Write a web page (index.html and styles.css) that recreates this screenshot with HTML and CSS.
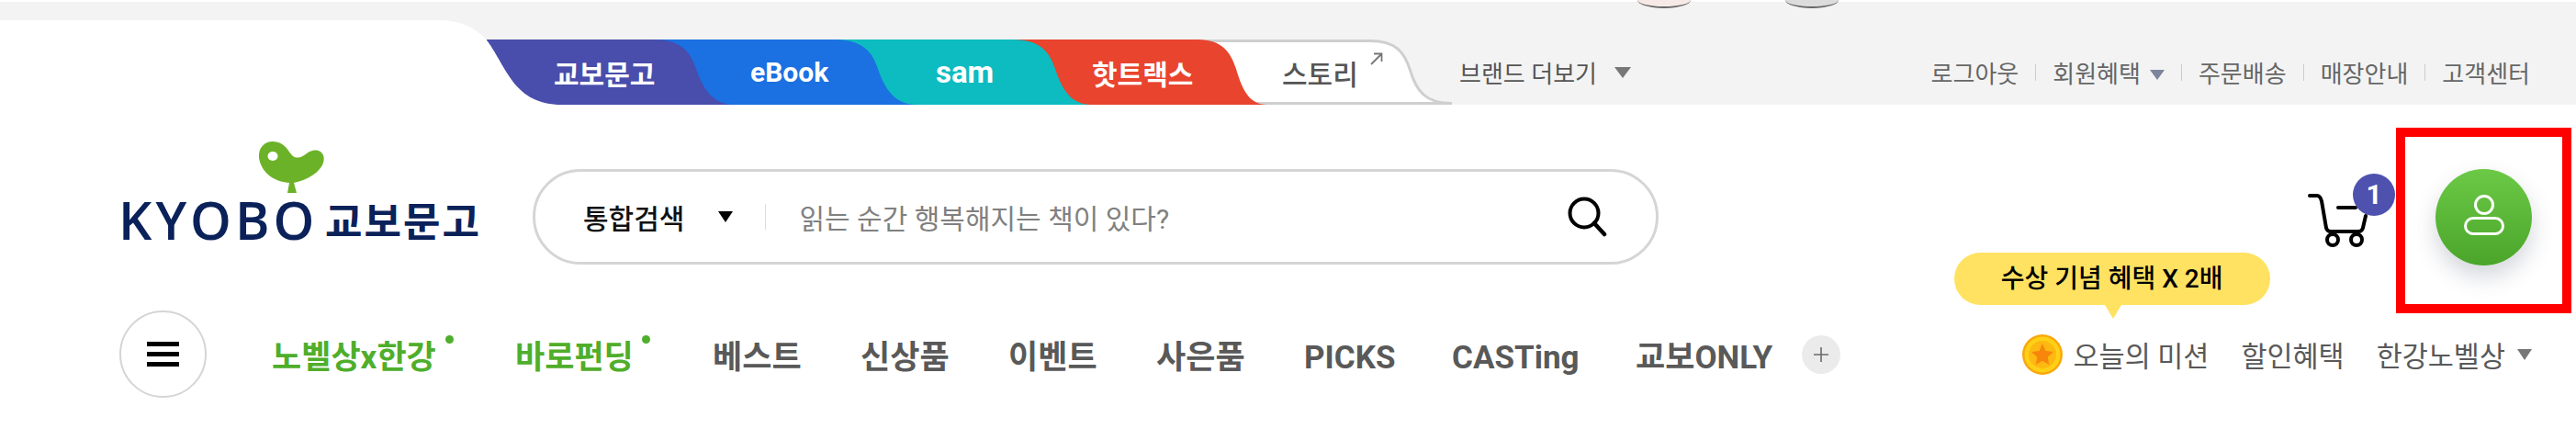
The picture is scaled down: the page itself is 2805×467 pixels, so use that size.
FILE: index.html
```html
<!DOCTYPE html>
<html lang="ko">
<head>
    <meta charset="UTF-8">
    <title>KYOBO 교보문고</title>
    <link rel="stylesheet" href="styles.css">
</head>
<body>
    <div class="topbar">
        <div class="home-notch">
            <svg class="tab-shape" width="610" height="112"><path d="M0 20H478C504 20 520 30 531 43C552 72 560 112 612 112H0Z" fill="#fff"/></svg>
        </div>
        <div class="brand-tabs">
            <a class="tab tab-kyobo">
                <svg class="tab-shape" width="270" height="71"><path d="M0 0H182C212 0 222 14 228 32C236 56 248 71 270 71H0Z" fill="#494dab"/></svg>
                <span>교보문고</span>
            </a>
            <a class="tab tab-ebook">
                <svg class="tab-shape" width="284" height="71"><path d="M0 0H194C226 0 236 14 242 32C250 56 262 71 284 71H0Z" fill="#1b70e2"/></svg>
                <span>eBook</span>
            </a>
            <a class="tab tab-sam">
                <svg class="tab-shape" width="281" height="71"><path d="M0 0H195C225 0 235 14 241 32C249 56 259 71 281 71H0Z" fill="#0cbcc0"/></svg>
                <span>sam</span>
            </a>
            <a class="tab tab-hot">
                <svg class="tab-shape" width="277" height="71"><path d="M0 0H201C228 0 237 14 243 32C250 56 258 71 277 71H0Z" fill="#e9442e"/></svg>
                <span>핫트랙스</span>
            </a>
            <a class="tab tab-story">
                <svg class="tab-shape" width="277" height="71"><path d="M0 1.5H188C216 1.5 225 14 231 32C238 56 248 69.500 277 69.500H0Z" fill="#fff" stroke="#cfcfcf" stroke-width="3"/></svg>
                <span>스토리</span>
                <svg class="story-arrow" width="14" height="14" viewBox="0 0 14 14"><path d="M1 13L12.500 1.500M4 1.500H12.500V10" fill="none" stroke="#777" stroke-width="1.800"/></svg>
            </a>
        </div>
        <a class="brand-more">브랜드 더보기<i class="caret caret-gray"></i></a>
        <ul class="util-menu">
            <li>로그아웃</li>
            <li>회원혜택<i class="caret caret-blue"></i></li>
            <li>주문배송</li>
            <li>매장안내</li>
            <li>고객센터</li>
        </ul>
        <div class="peek peek-a"></div>
        <div class="peek peek-b"></div>
    </div>

    <div class="main-row">
        <a class="logo">
            <svg class="logo-bird" width="72" height="57" viewBox="0 0 72 57">
                <path d="M15 0C27 0 31 9 36 15C41 20 47 17 52 13C58 8 67 8 70 15C73 23 66 32 58 37C50 42 43 44 38 45L41 56H31L33 45C19 44 3 36 0 18C-1 8 5 0 15 0Z" fill="#6cb229"/>
                <ellipse cx="15" cy="16" rx="5.500" ry="5" fill="#fff"/>
            </svg>
            <div class="logo-text"><span class="logo-en">KYOBO</span><span class="logo-ko">교보문고</span></div>
        </a>
        <div class="search">
            <span class="search-type">통합검색</span>
            <i class="caret caret-black"></i>
            <span class="search-sep"></span>
            <span class="search-hint">읽는 순간 행복해지는 책이 있다?</span>
            <svg class="search-icon" width="44" height="44" viewBox="0 0 44 44"><circle cx="19" cy="18" r="15.500" fill="none" stroke="#000" stroke-width="4"/><path d="M30 29L41 41" stroke="#000" stroke-width="4.500" stroke-linecap="round"/></svg>
        </div>
        <a class="cart">
            <svg width="66" height="58" viewBox="0 0 66 58">
                <path d="M2 2H10C13 2 14 4 15 8L20 37C21 40 22 41 25 41H55C58 41 59 40 60 37L63 24M33 15H52" fill="none" stroke="#000" stroke-width="4" stroke-linecap="round"/>
                <circle cx="27" cy="50" r="6" fill="none" stroke="#000" stroke-width="4"/>
                <circle cx="53" cy="50" r="6" fill="none" stroke="#000" stroke-width="4"/>
            </svg>
            <span class="cart-badge">1</span>
        </a>
        <a class="account">
            <svg class="account-icon" width="44" height="44" viewBox="0 0 44 44">
                <circle cx="22" cy="11" r="9.500" fill="none" stroke="#fff" stroke-width="3"/>
                <rect x="1.500" y="25.500" width="41" height="17" rx="8.500" fill="none" stroke="#fff" stroke-width="3"/>
            </svg>
        </a>
        <div class="highlight-box"></div>
    </div>

    <div class="nav-row">
        <button class="menu-btn"><span></span><span></span><span></span></button>
        <ul class="nav-main">
            <li class="nav-green nav-w1">노벨상x한강</li>
            <li class="nav-green nav-w2">바로펀딩</li>
            <li class="nav-w3">베스트</li>
            <li class="nav-w3">신상품</li>
            <li class="nav-w3">이벤트</li>
            <li class="nav-w3">사은품</li>
            <li class="nav-w3">PICKS</li>
            <li class="nav-w4">CASTing</li>
            <li class="nav-w5">교보ONLY</li>
        </ul>
        <span class="nav-plus"><svg width="16" height="16" viewBox="0 0 16 16"><path d="M8 0V16M0 8H16" stroke="#6b6b6b" stroke-width="1.600"/></svg></span>
        <ul class="nav-side">
            <li class="mission">
                <div class="bubble">수상 기념 혜택 X 2배</div>
                <svg class="coin" width="44" height="44" viewBox="0 0 44 44">
                    <circle cx="22" cy="22" r="22" fill="#f9a80c"/>
                    <circle cx="22" cy="22" r="19.500" fill="#ffd015"/>
                    <circle cx="22" cy="22" r="15" fill="#fdb811"/>
                    <path d="M22 10L25.500 18L34 19L27.700 24.700L29.400 33L22 28.800L14.600 33L16.300 24.700L10 19L18.500 18Z" fill="#f8860d"/>
                </svg>
                오늘의 미션
            </li>
            <li>할인혜택</li>
            <li>한강노벨상<i class="caret caret-gray-sm"></i></li>
        </ul>
    </div>
</body>
</html>
```

FILE: styles.css
```css
* {
    box-sizing: border-box;
}
body {
    margin: 0;
    background: white;
    font-family: Roboto, "Noto Sans CJK KR", sans-serif;
    overflow: hidden;
}
ul {
    list-style: none;
    margin: 0;
    padding: 0;
}
.caret {
    display: inline-block;
    width: 0;
    height: 0;
    border-style: solid;
    border-color: transparent;
}

/* top bar */
.topbar {
    display: flex;
    position: relative;
    height: 112px;
    margin-top: 2px;
    background-color: #f3f3f3;
}
.home-notch {
    position: relative;
    width: 530px;
    flex: none;
    z-index: 6;
}
.brand-tabs {
    display: flex;
    height: 71px;
    margin-top: 41px;
    flex: none;
}
.tab {
    position: relative;
    display: flex;
    align-items: center;
    height: 71px;
    color: white;
    font-size: 30px;
    font-weight: 700;
}
.tab span {
    position: relative;
}
.tab-shape {
    position: absolute;
    top: 0;
    left: 0;
    overflow: visible;
}
.tab-kyobo {
    width: 270px;
    margin-right: -86px;
    padding-left: 73px;
    z-index: 5;
}
.tab-ebook {
    width: 284px;
    margin-right: -90px;
    padding-left: 103px;
    z-index: 4;
}
.tab-sam {
    width: 281px;
    margin-right: -86px;
    padding-left: 111px;
    font-size: 33px;
    z-index: 3;
}
.tab-hot {
    width: 277px;
    margin-right: -76px;
    padding-left: 86px;
    z-index: 2;
}
.tab-story {
    width: 277px;
    padding-left: 92px;
    color: #555;
    font-weight: 500;
    z-index: 1;
}
.story-arrow {
    position: absolute;
    top: 14px;
    left: 188px;
}
.brand-more {
    display: flex;
    align-items: center;
    height: 71px;
    margin-top: 41px;
    margin-left: 8px;
    color: #555;
    font-size: 26px;
    white-space: nowrap;
}
.caret-gray {
    margin-left: 19px;
    border-width: 12px 9.500px 0;
    border-top-color: #777;
}
.util-menu {
    display: flex;
    align-items: center;
    height: 71px;
    margin-top: 41px;
    margin-left: auto;
    padding-right: 50px;
    color: #666;
    font-size: 26px;
}
.util-menu li {
    position: relative;
    margin-left: 37px;
    white-space: nowrap;
}
.util-menu li + li::before {
    content: "";
    position: absolute;
    top: 50%;
    left: -19px;
    width: 1px;
    height: 18px;
    margin-top: -9px;
    background: #ccc;
}
.caret-blue {
    margin-left: 10px;
    border-width: 11px 8px 0;
    border-top-color: #7d849c;
    vertical-align: 3px;
}
.peek {
    position: absolute;
    top: -2px;
    width: 58px;
    height: 9px;
    border-radius: 0 0 29px 29px / 0 0 9px 9px;
    border-bottom: 2px solid #666;
}
.peek-a {
    left: 1783px;
    background: #f7e9e6;
}
.peek-b {
    left: 1944px;
    background: #dcdcdc;
}

/* logo, search, cart */
.main-row {
    display: flex;
    align-items: center;
    position: relative;
    height: 204px;
    padding-top: 40px;
    padding-left: 133px;
}
.logo {
    display: block;
    align-self: flex-start;
    width: 447px;
    flex: none;
}
.logo-bird {
    display: block;
    margin-left: 149px;
}
.logo-text {
    display: flex;
    align-items: center;
    height: 56px;
    color: #0a2159;
    font-weight: 700;
}
.logo-en {
    width: 221px;
    margin-left: -4px;
    margin-right: 4px;
    font-family: "Open Sans", sans-serif;
    font-size: 57px;
    font-weight: 600;
    letter-spacing: 4px;
}
.logo-ko {
    font-size: 44px;
    letter-spacing: 2px;
}
.search {
    display: flex;
    align-items: center;
    width: 1226px;
    height: 104px;
    padding: 0 53px 0 52px;
    border: 3px solid #d5d5d5;
    border-radius: 52px;
    flex: none;
}
.search-type {
    color: #111;
    font-size: 30px;
    font-weight: 500;
}
.caret-black {
    margin-left: 37px;
    border-width: 12px 8px 0;
    border-top-color: #000;
}
.search-sep {
    width: 1px;
    height: 28px;
    margin-left: 35px;
    background: #ddd;
}
.search-hint {
    margin-left: 36px;
    color: #808080;
    font-size: 30px;
}
.search-icon {
    margin-left: auto;
}
.cart {
    position: relative;
    display: block;
    width: 66px;
    height: 58px;
    margin-left: 707px;
    margin-top: 8px;
    flex: none;
}
.cart svg {
    display: block;
}
.cart-badge {
    position: absolute;
    top: -22px;
    left: 49px;
    width: 46px;
    height: 46px;
    border-radius: 50%;
    background: #4e52ae;
    color: white;
    font-size: 30px;
    font-weight: 700;
    line-height: 46px;
    text-align: center;
}
.account {
    display: flex;
    align-items: center;
    justify-content: center;
    width: 105px;
    height: 105px;
    margin-left: 73px;
    border-radius: 50%;
    background: linear-gradient(#6cc946, #4aa52a);
    box-shadow: 0 12px 24px rgba(60,70,90,0.22);
    flex: none;
}
.account-icon {
    margin-bottom: 4px;
}
.highlight-box {
    position: absolute;
    top: 25px;
    left: 2609px;
    width: 191px;
    height: 202px;
    border: 10px solid #ff0000;
}

/* nav */
.nav-row {
    display: flex;
    align-items: center;
    height: 95px;
    margin-top: 20px;
    padding-left: 130px;
}
.menu-btn {
    display: flex;
    flex-direction: column;
    align-items: center;
    justify-content: center;
    gap: 6px;
    width: 95px;
    height: 95px;
    padding: 0;
    border: 2px solid #d5d5d5;
    border-radius: 50%;
    background: white;
    flex: none;
}
.menu-btn span {
    display: block;
    width: 35px;
    height: 5px;
    background: #000;
}
.nav-main {
    display: flex;
    align-items: baseline;
    margin-left: 71px;
    color: #595959;
    font-size: 35px;
    font-weight: 700;
}
.nav-main li {
    position: relative;
    white-space: nowrap;
}
.nav-w1 { width: 265px; }
.nav-w2 { width: 215px; }
.nav-w3 { width: 161px; }
.nav-w4 { width: 200px; }
.nav-w5 { width: 181px; }
.nav-green {
    color: #4fae2b;
}
.nav-green::after {
    content: "";
    position: absolute;
    top: 5px;
    width: 9px;
    height: 9px;
    border-radius: 50%;
    background: #4fae2b;
}
.nav-w1::after { left: 189px; }
.nav-w2::after { left: 138px; }
.nav-plus {
    display: flex;
    align-items: center;
    justify-content: center;
    width: 42px;
    height: 42px;
    border-radius: 50%;
    background: #ebebeb;
    flex: none;
}
.nav-side {
    display: flex;
    align-items: center;
    margin-left: auto;
    padding-right: 48px;
    color: #595959;
    font-size: 30.500px;
}
.nav-side li {
    position: relative;
    display: flex;
    align-items: center;
    margin-left: 35px;
    white-space: nowrap;
}
.coin {
    margin-right: 12px;
}
.caret-gray-sm {
    margin-left: 13px;
    border-width: 12px 8.500px 0;
    border-top-color: #777;
}
.bubble {
    position: absolute;
    top: -89px;
    left: -74px;
    width: 344px;
    height: 57px;
    border-radius: 29px;
    background: #ffe262;
    color: #000;
    font-size: 28px;
    font-weight: 500;
    line-height: 57px;
    text-align: center;
}
.bubble::after {
    content: "";
    position: absolute;
    top: 57px;
    left: 164px;
    border-style: solid;
    border-width: 15px 9px 0;
    border-color: #ffe262 transparent transparent;
}
```
